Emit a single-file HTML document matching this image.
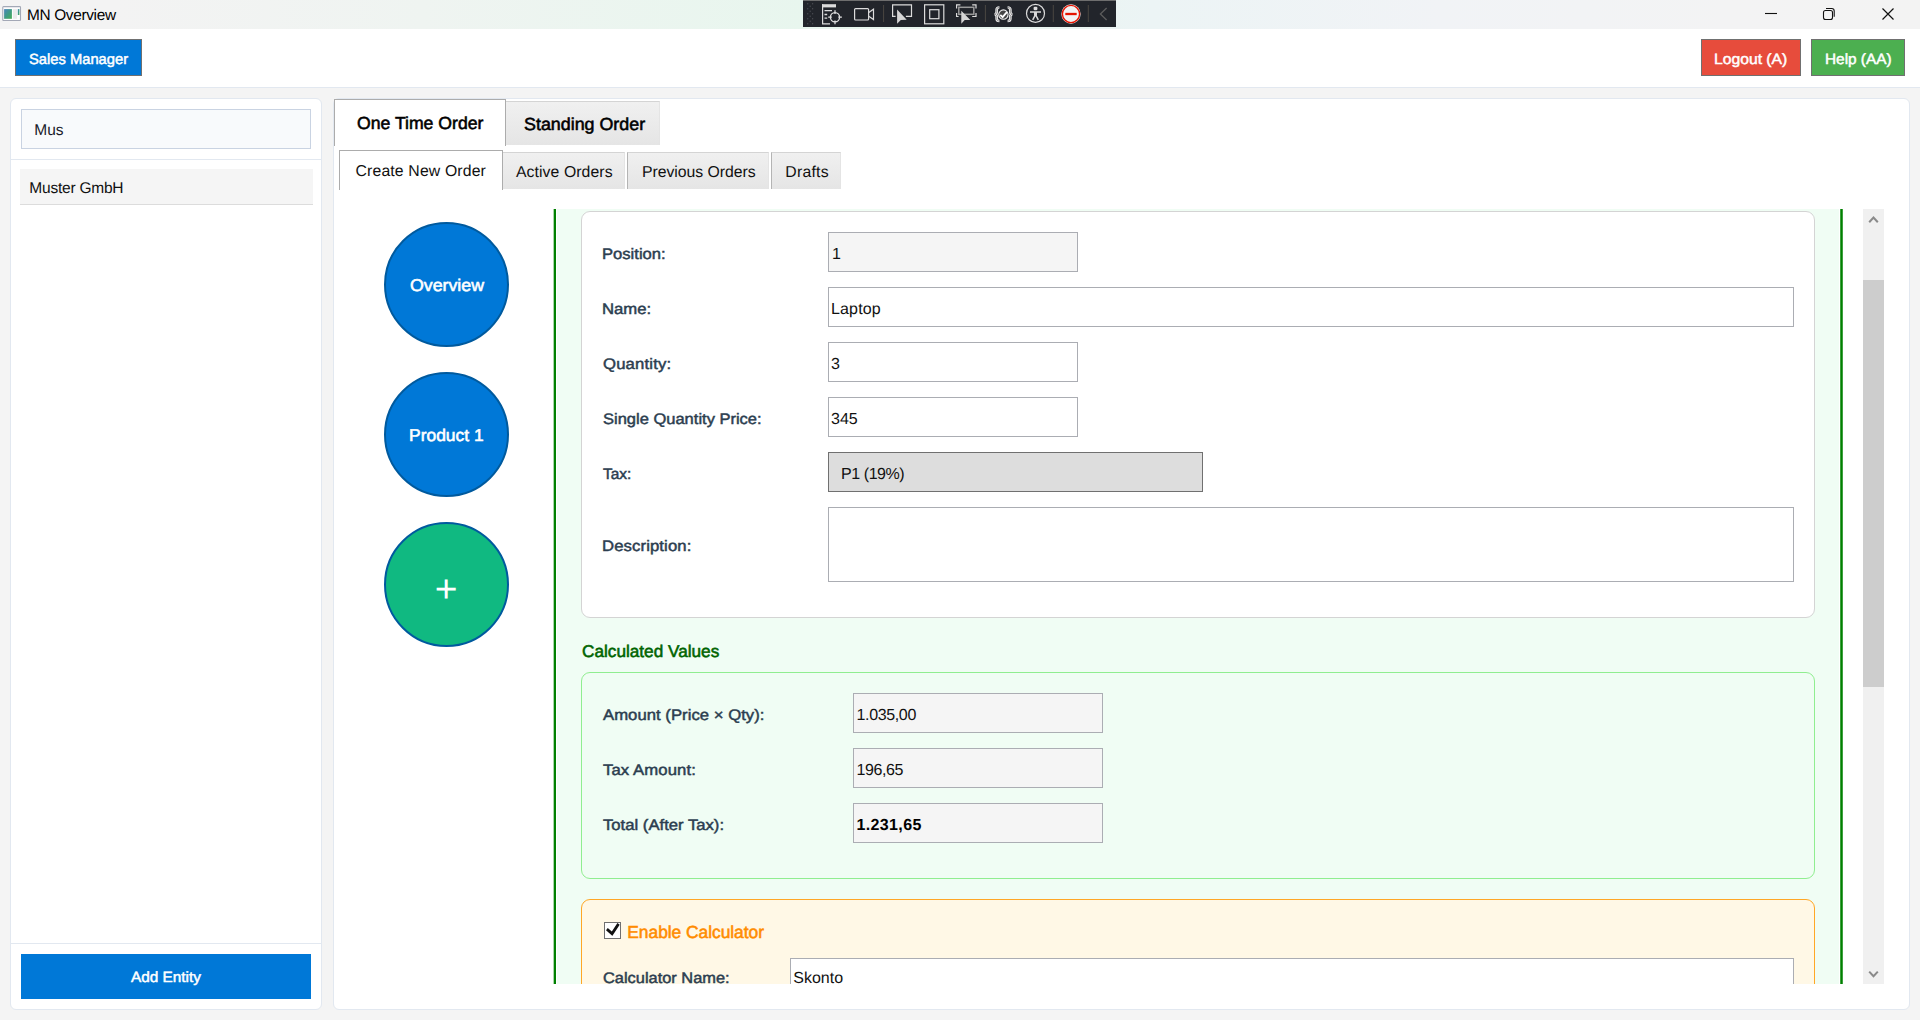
<!DOCTYPE html>
<html lang="en">
<head>
<meta charset="utf-8">
<title>MN Overview</title>
<style>
*{box-sizing:border-box;margin:0;padding:0}
html,body{width:1920px;height:1020px;overflow:hidden}
body{position:relative;background:#f4f4f4;font-family:"Liberation Sans","DejaVu Sans",sans-serif;color:#111}
.a{position:absolute}
.t{position:absolute;white-space:pre;line-height:1;text-rendering:geometricPrecision;transform-origin:0 0}
.b{font-weight:bold}
.s{-webkit-text-stroke:0.35px currentColor}
#titlebar{left:0;top:0;width:1920px;height:29px;background:linear-gradient(90deg,#f3f3f3 0,#f3f3f3 6%,#eff4f1 22%,#e8f6ee 42%,#eaf5f1 55%,#ecf4f5 60%,#f1f3f6 75%,#f3f3f4 90%,#f3f3f3 100%)}
#header{left:0;top:29px;width:1920px;height:59px;background:#fff;border-bottom:1px solid #e2e8f0}
.btn{position:absolute;border:1px solid #707070}
.panel{position:absolute;background:#fff;border:1px solid #e2e8f0;border-radius:6px}
.inp{position:absolute;background:#fff;border:1px solid #abadb3}
.ro{background:#f5f5f5}
.tab{position:absolute;background:linear-gradient(#f0f0f0,#e5e5e5);border:1px solid #d4d4d4;border-left-color:#b4b4b4;border-right-color:#e4e4e4;border-bottom:none}
.tabsel{position:absolute;background:#fff;border:1px solid #acacac;border-bottom:none}
.circle{position:absolute;width:125px;height:125px;border-radius:50%;border:2px solid #005a9e;background:#0078d7}
</style>
</head>
<body>
<!-- window title bar -->
<div id="titlebar" class="a"></div>
<!-- app icon -->
<svg class="a" style="left:2px;top:6px" width="20" height="16" viewBox="0 0 20 16">
 <defs><linearGradient id="ig" x1="0" y1="0" x2="1" y2="1"><stop offset="0" stop-color="#4c84bd"/><stop offset=".5" stop-color="#3f9a86"/><stop offset="1" stop-color="#48ad52"/></linearGradient></defs>
 <rect x="0.800" y="0.600" width="17.700" height="13.900" rx=".700" fill="#fdfdfd" stroke="#a3a8b6" stroke-width="1.100"/>
 <rect x="2.100" y="3.100" width="7.800" height="9.700" fill="url(#ig)"/>
 <rect x="11" y="3.100" width="4" height="9.700" fill="#ececec"/>
 <rect x="15.800" y="3.100" width="1.600" height="5.900" fill="url(#ig)"/>
</svg>
<!-- debug toolbar -->
<div class="a" id="dbg" style="left:803px;top:0;width:313px;height:27px;background:#22252b;border-top:1px solid #6e6e6e"></div>
<!--DBG0--><svg class="a" style="left:803px;top:0" width="313" height="27" viewBox="0 0 313 27" fill="none" stroke="#dcdcdc" stroke-width="1.2">
 <g fill="#4b4e54" stroke="none"><rect x="4.1" y="3.15" width="1.2" height="1.2"/><rect x="9.0" y="3.15" width="1.2" height="1.2"/><rect x="6.6" y="5.65" width="1.2" height="1.2"/><rect x="4.1" y="8.15" width="1.2" height="1.2"/><rect x="9.0" y="8.15" width="1.2" height="1.2"/><rect x="6.6" y="10.65" width="1.2" height="1.2"/><rect x="4.1" y="13.15" width="1.2" height="1.2"/><rect x="9.0" y="13.15" width="1.2" height="1.2"/><rect x="6.6" y="15.65" width="1.2" height="1.2"/><rect x="4.1" y="18.15" width="1.2" height="1.2"/><rect x="9.0" y="18.15" width="1.2" height="1.2"/><rect x="6.6" y="20.65" width="1.2" height="1.2"/><rect x="4.1" y="23.15" width="1.2" height="1.2"/><rect x="9.0" y="23.15" width="1.2" height="1.2"/></g>
 <!-- 1: doc + target -->
 <path d="M19.600 4.200v19.600h7.400" /><rect x="19" y="4.200" width="14" height="3.200" fill="#dcdcdc" stroke="none"/>
 <path d="M21.500 10.700h7.500M21.500 14.500h2.700M21.500 18.200h2.700" stroke-width="1.300"/>
 <circle cx="32" cy="17.200" r="4.600" stroke-width="1.400"/><path d="M32 10.300v3.600M32 20.600v3.600M25.200 17.200h3.600M35.300 17.200h3.600" stroke-width="1.300"/>
 <!-- 2: camera -->
 <rect x="51.600" y="8.600" width="14" height="11.400" rx="1"/><path d="M65.800 12.600l4.700-3.400v10.400l-4.700-3.400"/>
 <path d="M80.600 5v17M182.400 5v17M250.300 5v17M285.300 5v17" stroke="#4a4742" stroke-width="1"/>
 <!-- 3: select element -->
 <path d="M92.600 16.300h-3V4.900h18.900v11.400h-5.600"/>
 <path d="M94.100 9.400v14.400l3.700-3.900 5.900-.1z" fill="#d6d6d6" stroke="none"/>
 <!-- 4: layout adorners -->
 <rect x="121.600" y="4.800" width="19.200" height="19"/><rect x="126.700" y="9.700" width="9.200" height="9"/>
 <!-- 5: track focused -->
 <path d="M153.600 8.400V4.900h3.800M169.200 4.900h3.800v3.500M173 13v3.500h-3.800M153.600 13v3.500h2" />
 <rect x="155.800" y="7.300" width="15" height="7" stroke="#9a9a9a" stroke-width="1.500"/>
 <path d="M158.300 10.700v13l3.400-3.600 5.600-.1z" fill="#d6d6d6" stroke="none"/>
 <!-- 6: braces + check -->
 <g transform="translate(0 14.200) scale(1 .91) translate(0 -14.200)">
 <path d="M196.400 6.700c-2.300 0-2.700 1-2.700 2.500v2.500c0 1.300-.6 2.200-1.900 2.500 1.300.3 1.900 1.200 1.900 2.500v2.500c0 1.500.4 2.500 2.700 2.500M204.600 6.700c2.300 0 2.700 1 2.700 2.500v2.500c0 1.300.6 2.200 1.900 2.500-1.300.3-1.900 1.200-1.900 2.500v2.500c0 1.500-.4 2.500-2.700 2.500" stroke="#f2f2f2" stroke-width="2.700"/>
 <path d="M196.400 6.700c-2.300 0-2.700 1-2.700 2.500v2.500c0 1.300-.6 2.200-1.900 2.500 1.300.3 1.900 1.200 1.900 2.500v2.500c0 1.500.4 2.500 2.700 2.500M204.600 6.700c2.300 0 2.700 1 2.700 2.500v2.500c0 1.300.6 2.200 1.900 2.500-1.300.3-1.900 1.200-1.900 2.500v2.500c0 1.500-.4 2.500-2.700 2.500" stroke="#6a6a6a" stroke-width=".700"/>
 </g>
 <circle cx="200.400" cy="14.600" r="4.700" fill="#444" stroke="#eee" stroke-width="1.100"/><path d="M197.300 14.900l2.300 2.200 4.300-5" stroke="#fff" stroke-width="1.800"/>
 <!-- 7: accessibility -->
 <circle cx="232.500" cy="13.400" r="9"/><rect x="230.600" y="6.800" width="3.800" height="3.400" rx="1.200" fill="#dcdcdc" stroke="none"/>
 <path d="M227 12h11" stroke-width="1.500"/><path d="M232.500 12v3.600" stroke-width="3"/><path d="M229.700 19.800l2.800-5.200 2.800 5.200" stroke-width="1.500"/>
 <!-- 8: stop -->
 <circle cx="268" cy="14" r="9.700" fill="#f3f3f3" stroke="none"/><circle cx="268" cy="14" r="8.600" stroke="#e51400" stroke-width="1.400"/><path d="M262.300 14h11.400" stroke="#e51400" stroke-width="2.300"/>
 <!-- chevron -->
 <path d="M303.600 8l-6.200 6 6.200 6" stroke="#5c5c5c" stroke-width="1.300"/>
</svg><!--DBG1-->
<!-- window controls -->
<svg class="a" style="left:1750px;top:0" width="170" height="29" viewBox="0 0 170 29">
 <path d="M15 13.5h12" stroke="#111" stroke-width="1.1" fill="none"/>
 <rect x="73.5" y="10.5" width="9" height="9" rx="2" fill="none" stroke="#111" stroke-width="1.1"/>
 <path d="M76 8.500h5.700a2.500 2.500 0 0 1 2.500 2.500v5.700" fill="none" stroke="#111" stroke-width="1.100"/>
 <path d="M132.500 8.500l11 11m0-11l-11 11" stroke="#111" stroke-width="1.2" fill="none"/>
</svg>
<!-- header -->
<div id="header" class="a"></div>
<div class="btn" style="left:15px;top:39px;width:127px;height:37px;background:#0078d7"></div>
<div class="btn" style="left:1701px;top:39px;width:100px;height:37px;background:#e74c3c"></div>
<div class="btn" style="left:1811px;top:39px;width:94px;height:37px;background:#4caf50"></div>
<!-- sidebar -->
<div class="panel" style="left:10px;top:98px;width:312px;height:912px"></div>
<div class="a" style="left:21px;top:109px;width:290px;height:40px;background:#f8fafc;border:1px solid #c9d3e2"></div>
<div class="a" style="left:11px;top:159px;width:310px;height:1px;background:#e2e8f0"></div>
<div class="a" style="left:20px;top:169px;width:293px;height:36px;background:#f5f5f5;border-bottom:1px solid #dcdcdc"></div>
<div class="a" style="left:11px;top:943px;width:310px;height:1px;background:#e2e8f0"></div>
<div class="a" style="left:21px;top:954px;width:290px;height:45px;background:#0078d7"></div>
<!-- main panel -->
<div class="panel" style="left:333px;top:98px;width:1577px;height:912px"></div>
<!-- main tabs -->
<div class="tabsel" style="left:334px;top:99px;width:172px;height:47px"></div>
<div class="tab" style="left:506px;top:101px;width:154px;height:44px;border-left:none"></div>
<!-- sub tabs -->
<div class="tabsel" style="left:339px;top:150px;width:164px;height:40px"></div>
<div class="tab" style="left:503px;top:152px;width:122px;height:37px;border-left:none"></div>
<div class="tab" style="left:627px;top:152px;width:142px;height:37px"></div>
<div class="tab" style="left:771px;top:152px;width:70px;height:37px"></div>
<!-- step circles -->
<div class="circle" style="left:383.5px;top:221.5px"></div>
<div class="circle" style="left:383.5px;top:371.5px"></div>
<div class="circle" style="left:383.5px;top:521.5px;background:#10b981"></div>
<!-- scroll viewport -->
<div class="a" style="left:557px;top:209px;width:1282px;height:775px;background:#f0fdf4"></div>
<div class="a" style="left:553px;top:209px;width:1px;height:775px;background:#a9d5a9"></div>
<div class="a" style="left:554px;top:209px;width:2px;height:775px;background:#008000"></div>
<div class="a" style="left:1840px;top:209px;width:3px;height:775px;background:#3d9f3d"></div>
<div class="a" style="left:1841px;top:209px;width:1px;height:775px;background:#008000"></div>
<!-- product card -->
<div class="a" style="left:581px;top:211px;width:1234px;height:407px;background:#fff;border:1px solid #d4d4d4;border-radius:9px"></div>
<div class="inp ro" style="left:828px;top:232px;width:250px;height:40px"></div>
<div class="inp" style="left:828px;top:287px;width:966px;height:40px"></div>
<div class="inp" style="left:828px;top:342px;width:250px;height:40px"></div>
<div class="inp" style="left:828px;top:397px;width:250px;height:40px"></div>
<div class="a" style="left:828px;top:452px;width:375px;height:40px;background:#dddddd;border:1px solid #707070"></div>
<div class="inp" style="left:828px;top:507px;width:966px;height:75px"></div>
<!-- calculated values card -->
<div class="a" style="left:581px;top:672px;width:1234px;height:207px;background:#f0fdf4;border:1px solid #90ee90;border-radius:9px"></div>
<div class="inp ro" style="left:853px;top:693px;width:250px;height:40px"></div>
<div class="inp ro" style="left:853px;top:748px;width:250px;height:40px"></div>
<div class="inp ro" style="left:853px;top:803px;width:250px;height:40px"></div>
<!-- calculator card -->
<div class="a" style="left:581px;top:899px;width:1234px;height:100px;background:#fff8e6;border:1px solid #ffa726;border-radius:9px"></div>
<div class="a" style="left:604px;top:922px;width:17px;height:17px;background:#fff;border:1px solid #707070"></div>
<svg class="a" style="left:606.3px;top:923.4px" width="13.7" height="12.8" viewBox="0 0 9.975 9.1" preserveAspectRatio="none"><path d="M9.975 1.223L4.698 9.098h-.176L0 5.193l1.277-1.671L4.255 6.088 8.333 0z" fill="#111"/></svg>
<div class="inp" style="left:790px;top:958px;width:1004px;height:40px"></div>
<!-- scrollbar -->
<div class="a" style="left:1863px;top:209px;width:21px;height:775px;background:#f0f0f0"></div>
<div class="a" style="left:1863px;top:280px;width:21px;height:407px;background:#cdcdcd"></div>
<svg class="a" style="left:1863px;top:209px" width="21" height="21" viewBox="0 0 21 21"><path d="M6.200 13.200l4.300-4.700 4.300 4.700" stroke="#8a8a8a" stroke-width="2" fill="none"/></svg>
<svg class="a" style="left:1863px;top:963px" width="21" height="21" viewBox="0 0 21 21"><path d="M6.200 8.600l4.300 4.700 4.300-4.700" stroke="#8a8a8a" stroke-width="2" fill="none"/></svg>
<!-- text -->
<span class="t" style="left:26.90px;top:8.00px;font-size:15.4px;color:#000;letter-spacing:-0.320px;">MN Overview</span>
<span class="t s" style="left:28.70px;top:53.00px;font-size:14.7px;color:#fff;transform:scaleX(1.0030);-webkit-text-stroke-width:0.48px;">Sales Manager</span>
<span class="t s" style="left:1714.34px;top:53.00px;font-size:14.8px;color:#fff;transform:scaleX(1.0603);-webkit-text-stroke-width:0.48px;">Logout (A)</span>
<span class="t s" style="left:1824.56px;top:53.00px;font-size:14.8px;color:#fff;transform:scaleX(1.0381);-webkit-text-stroke-width:0.48px;">Help (AA)</span>
<span class="t" style="left:34.20px;top:123.00px;font-size:15.5px;color:#1a1a2a;letter-spacing:0.050px;">Mus</span>
<span class="t" style="left:29.30px;top:181.00px;font-size:15.5px;color:#111;letter-spacing:-0.220px;">Muster GmbH</span>
<span class="t s" style="left:131.00px;top:971.00px;font-size:14.8px;color:#fff;transform:scaleX(1.0368);-webkit-text-stroke-width:0.48px;">Add Entity</span>
<span class="t s" style="left:356.70px;top:115.00px;font-size:17.4px;color:#000;transform:scaleX(1.0136);-webkit-text-stroke-width:0.55px;">One Time Order</span>
<span class="t s" style="left:523.80px;top:116.00px;font-size:17.4px;color:#000;transform:scaleX(1.0271);-webkit-text-stroke-width:0.55px;">Standing Order</span>
<span class="t" style="left:355.50px;top:164.00px;font-size:15.8px;color:#111;letter-spacing:0.147px;">Create New Order</span>
<span class="t" style="left:515.90px;top:165.00px;font-size:15.8px;color:#111;letter-spacing:0.083px;">Active Orders</span>
<span class="t" style="left:642.00px;top:165.00px;font-size:15.8px;color:#111;letter-spacing:-0.036px;">Previous Orders</span>
<span class="t" style="left:785.30px;top:165.00px;font-size:15.8px;color:#111;letter-spacing:0.220px;">Drafts</span>
<span class="t s" style="left:409.60px;top:277.00px;font-size:17px;color:#fff;transform:scaleX(1.0437);-webkit-text-stroke-width:0.55px;">Overview</span>
<span class="t s" style="left:408.57px;top:427.00px;font-size:17px;color:#fff;transform:scaleX(1.0264);-webkit-text-stroke-width:0.55px;">Product 1</span>
<span class="t" style="left:434.85px;top:570.00px;font-size:39px;color:#fff;">+</span>
<span class="t s" style="left:601.91px;top:247.00px;font-size:15.2px;color:#2c3e50;transform:scaleX(1.0930);-webkit-text-stroke-width:0.48px;">Position:</span>
<span class="t s" style="left:601.90px;top:302.00px;font-size:15.2px;color:#2c3e50;transform:scaleX(1.1000);-webkit-text-stroke-width:0.48px;">Name:</span>
<span class="t s" style="left:603.00px;top:357.00px;font-size:15.2px;color:#2c3e50;letter-spacing:0.148px;transform:scaleX(1.1000);-webkit-text-stroke-width:0.48px;">Quantity:</span>
<span class="t s" style="left:603.00px;top:412.00px;font-size:15.2px;color:#2c3e50;transform:scaleX(1.0862);-webkit-text-stroke-width:0.48px;">Single Quantity Price:</span>
<span class="t s" style="left:603.00px;top:467.00px;font-size:15.2px;color:#2c3e50;transform:scaleX(1.0185);-webkit-text-stroke-width:0.48px;">Tax:</span>
<span class="t s" style="left:601.90px;top:539.00px;font-size:15.2px;color:#2c3e50;letter-spacing:0.091px;transform:scaleX(1.1000);-webkit-text-stroke-width:0.48px;">Description:</span>
<span class="t" style="left:832.00px;top:247.00px;font-size:16px;color:#111;">1</span>
<span class="t" style="left:831.00px;top:302.00px;font-size:16px;color:#111;letter-spacing:0.160px;">Laptop</span>
<span class="t" style="left:831.00px;top:357.00px;font-size:16px;color:#111;">3</span>
<span class="t" style="left:831.00px;top:412.00px;font-size:16px;color:#111;">345</span>
<span class="t" style="left:841.00px;top:467.00px;font-size:16px;color:#111;letter-spacing:-0.429px;">P1 (19%)</span>
<span class="t s" style="left:581.90px;top:643.00px;font-size:17px;color:#006400;transform:scaleX(1.0110);-webkit-text-stroke-width:0.55px;">Calculated Values</span>
<span class="t s" style="left:602.80px;top:708.00px;font-size:15.2px;color:#2c3e50;letter-spacing:0.018px;transform:scaleX(1.1000);-webkit-text-stroke-width:0.48px;">Amount (Price × Qty):</span>
<span class="t s" style="left:602.80px;top:763.00px;font-size:15.2px;color:#2c3e50;letter-spacing:0.082px;transform:scaleX(1.1000);-webkit-text-stroke-width:0.48px;">Tax Amount:</span>
<span class="t s" style="left:602.80px;top:818.00px;font-size:15.2px;color:#2c3e50;transform:scaleX(1.0973);-webkit-text-stroke-width:0.48px;">Total (After Tax):</span>
<span class="t" style="left:856.50px;top:708.00px;font-size:16px;color:#111;letter-spacing:-0.357px;">1.035,00</span>
<span class="t" style="left:856.50px;top:763.00px;font-size:16px;color:#111;letter-spacing:-0.400px;">196,65</span>
<span class="t b" style="left:856.50px;top:818.00px;font-size:16px;color:#000;letter-spacing:0.357px;">1.231,65</span>
<span class="t s" style="left:627.30px;top:924.00px;font-size:17.4px;color:#ff8c00;letter-spacing:-0.037px;-webkit-text-stroke-width:0.55px;">Enable Calculator</span>
<span class="t s" style="left:603.00px;top:971.00px;font-size:15.2px;color:#2c3e50;transform:scaleX(1.0786);-webkit-text-stroke-width:0.48px;">Calculator Name:</span>
<span class="t" style="left:793.20px;top:971.00px;font-size:16px;color:#111;letter-spacing:0.020px;">Skonto</span>
<!-- clip cover below viewport -->
<div class="a" style="left:540px;top:984px;width:1330px;height:25px;background:#fff"></div>
</body>
</html>
